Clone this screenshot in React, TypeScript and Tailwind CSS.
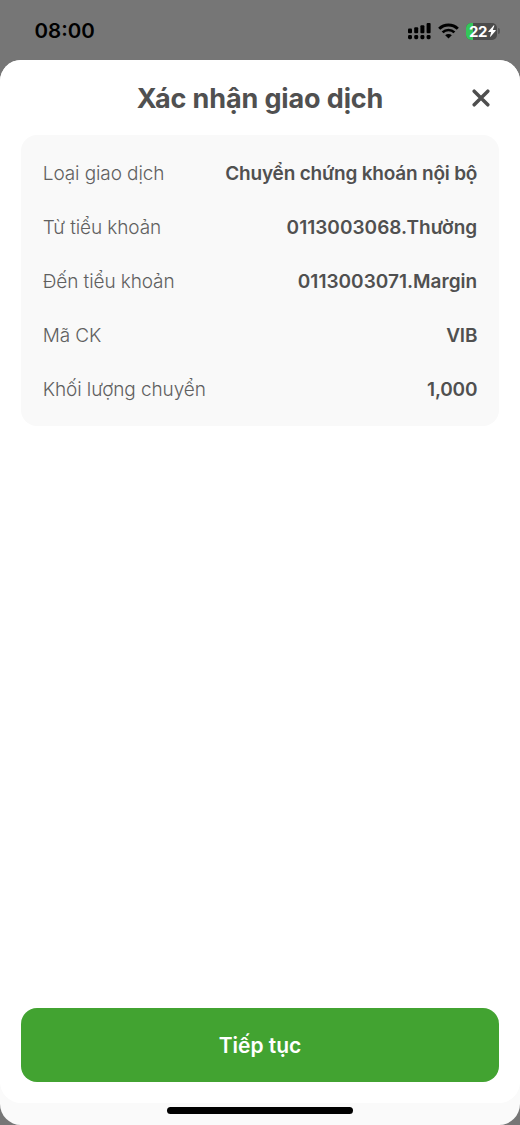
import { clsx } from "clsx";

const rows = [
  { label: "Loại giao dịch", value: "Chuyển chứng khoán nội bộ" },
  { label: "Từ tiểu khoản", value: "0113003068.Thường", numeric: true },
  { label: "Đến tiểu khoản", value: "0113003071.Margin", numeric: true },
  { label: "Mã CK", value: "VIB" },
  { label: "Khối lượng chuyển", value: "1,000" },
];

const signalBars = [
  { x: 0, top: 5.6 },
  { x: 6.2, top: 4.2 },
  { x: 12.4, top: 2.2 },
  { x: 18.6, top: 0 },
];

function SignalIcon() {
  return (
    <svg width="23" height="17" viewBox="0 0 23 17" fill="black">
      {signalBars.map((bar) => (
        <g key={bar.x}>
          <rect x={bar.x} y={bar.top} width="4" height={10.2 - bar.top} rx="1" />
          <rect x={bar.x} y="12" width="4" height="4.2" rx="1.4" />
        </g>
      ))}
    </svg>
  );
}

function WifiIcon() {
  return (
    <svg width="21" height="16" viewBox="0 0 21 16" fill="none" stroke="black">
      <path d="M1.2 5.8 A13.3 13.3 0 0 1 19.8 5.8" strokeWidth="3" />
      <path d="M4.6 9.4 A8.4 8.4 0 0 1 16.4 9.4" strokeWidth="2.7" />
      <path d="M10.5 15.6 L7.2 12.3 A4.7 4.7 0 0 1 13.8 12.3 Z" fill="black" stroke="none" />
    </svg>
  );
}

function Battery() {
  return (
    <div className="flex items-center gap-px">
      <div className="relative flex h-[17px] w-[31px] items-center overflow-hidden rounded-[5px] bg-[#4b4b4b]">
        <div className="absolute inset-y-0 left-0 w-[7px] bg-[#34c759]" />
        <span className="relative ml-[3px] text-[15px] leading-none font-bold tracking-[-0.4px] text-white">22</span>
        <svg className="relative ml-[0.5px]" width="8" height="12" viewBox="0 0 8 12" fill="white">
          <path d="M5.8 0.2 L0.3 6.4 Q0 7 0.7 7 H3.2 L2 11.4 Q2 12.1 2.7 11.6 L7.7 5.7 Q8 5 7.3 5 H4.8 L6.4 0.6 Q6.4 0 5.8 0.2 Z" />
        </svg>
      </div>
      <div className="h-[6px] w-[2px] rounded-r-full bg-[#565656]" />
    </div>
  );
}

function StatusBar() {
  return (
    <div className="flex h-[60px] items-center justify-between pr-[20px] pb-px pl-[34.5px]">
      <span className="mt-[4px] text-[20.5px] font-semibold text-black">08:00</span>
      <div className="flex items-center pt-[3px]">
        <SignalIcon />
        <div className="mr-[7px] ml-[7px]">
          <WifiIcon />
        </div>
        <Battery />
      </div>
    </div>
  );
}

export default function App() {
  return (
    <div className="flex h-[1125px] w-[520px] flex-col overflow-hidden bg-[#767676] font-['Inter',sans-serif]">
      <StatusBar />

      <div className="flex flex-1 flex-col rounded-[21px] bg-[#fafafa]">
        <div className="flex flex-1 flex-col rounded-[21px] bg-white px-[21.4px] pb-[21px]">
          {/* Header */}
          <header className="relative flex h-[75px] items-center justify-center">
            <h1 className="pt-[3px] text-[27px] font-bold tracking-[-0.13px] text-[#505050]">Xác nhận giao dịch</h1>
            <button className="absolute top-[29px] right-[9px]" aria-label="Đóng">
              <svg width="18" height="18" viewBox="0 0 18 18" fill="none" stroke="#4e4e4e" strokeWidth="3.5" strokeLinecap="round">
                <path d="M2.2 2.2 L15.8 15.8 M15.8 2.2 L2.2 15.8" />
              </svg>
            </button>
          </header>

          {/* Transaction details */}
          <div className="rounded-[16px] bg-[#f9f9f9] px-[21.4px] pt-[11.8px] pb-[9.2px]">
            {rows.map((row) => (
              <div key={row.label} className="flex h-[54.1px] items-center justify-between">
                <span className="text-[19px] font-light tracking-[-0.1px] text-[#606060]">{row.label}</span>
                <span
                  className={clsx(
                    "text-[19px] font-semibold text-[#505050]",
                    row.numeric ? "tracking-[0.02px]" : "tracking-[-0.2px]"
                  )}
                >
                  {row.value}
                </span>
              </div>
            ))}
          </div>

          <button className="mt-auto h-[74.5px] rounded-[16px] bg-[#42a331] pt-px text-[21px] font-semibold text-white">
            Tiếp tục
          </button>
        </div>

        {/* Home indicator */}
        <div className="flex h-[22px] justify-center pt-[4px]">
          <div className="h-[7px] w-[186px] rounded-full bg-black" />
        </div>
      </div>
    </div>
  );
}
